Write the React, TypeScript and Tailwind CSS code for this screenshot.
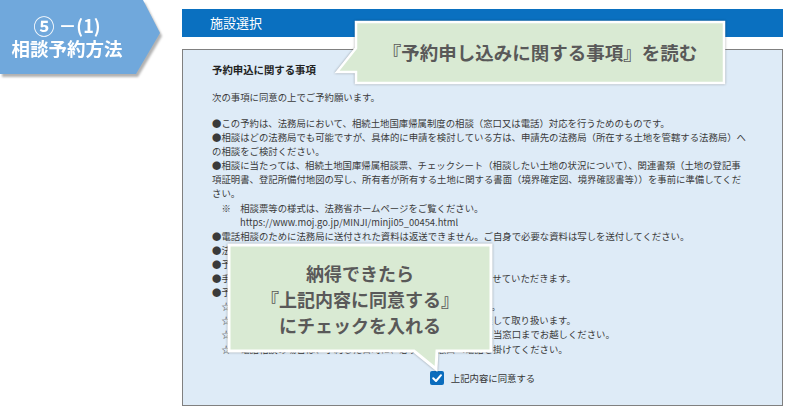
import React from "react";

const lines: { t: string; cls?: string }[] = [
  { t: "●この予約は、法務局において、相続土地国庫帰属制度の相談（窓口又は電話）対応を行うためのものです。" },
  { t: "●相談はどの法務局でも可能ですが、具体的に申請を検討している方は、申請先の法務局（所在する土地を管轄する法務局）へ" },
  { t: "の相談をご検討ください。" },
  { t: "●相談に当たっては、相続土地国庫帰属相談票、チェックシート（相談したい土地の状況について）、関連書類（土地の登記事" },
  { t: "項証明書、登記所備付地図の写し、所有者が所有する土地に関する書面（境界確定図、境界確認書等））を事前に準備してくだ" },
  { t: "さい。" },
  { t: "　※　相談票等の様式は、法務省ホームページをご覧ください。" },
  { t: "https://www.moj.go.jp/MINJI/minji05_00454.html", cls: "pl-[28px]" },
  { t: "●電話相談のために法務局に送付された資料は返送できません。ご自身で必要な資料は写しを送付してください。" },
  { t: "●法務局からの連絡は、予約時のメールアドレスに送信します。" },
  { t: "●予約の変更・取消しは、予約サイトから行ってください。" },
  { t: "●手続の状況によっては、相談日時の変更又は予約の取り消しをさせていただきます。" },
  { t: "●予約に当たっては、以下の点に御留意ください。" },
  { t: "　☆　相談時間は、原則として、１回当たり３０分以内となります。" },
  { t: "　☆　ご相談の内容は、個人情報として法令に基づいて適切に管理して取り扱います。" },
  { t: "　☆　窓口相談の場合は、予約した日時に、予約をした法務局の担当窓口までお越しください。" },
  { t: "　☆　電話相談の場合は、予約した日時に、必ず担当窓口へ電話を掛けてください。" },
];

export default function App() {
  return (
    <div className="relative flex h-[417px] w-[800px] overflow-hidden bg-white font-['Noto_Sans_CJK_JP','Noto_Sans',sans-serif]">
      {/* left step banner */}
      <div className="w-[182px] shrink-0">
        <div className="drop-shadow-[2px_3px_1px_rgba(0,0,0,0.3)]">
          <div className="flex h-[74px] w-[160px] flex-col items-center justify-center bg-[#70a8dc] pr-[26px] font-bold text-white [clip-path:polygon(0_0,143px_0,160px_33px,136px_74px,0_74px)]">
            <div className="flex items-center gap-[4px] text-[18px] leading-[22px]">
              <span className="text-[21px]">⑤</span>
              <span>－(1)</span>
            </div>
            <div className="text-[18.5px] leading-[24px]">相談予約方法</div>
          </div>
        </div>
      </div>

      {/* main column */}
      <div className="flex w-[601px] shrink-0 flex-col gap-[12px] pt-[9px]">
        <div className="flex h-[28px] items-center bg-[#0a70c0] pl-[28px] text-[13px] text-white">
          施設選択
        </div>
        <div className="flex h-[357px] flex-col border border-[#808080] bg-[#deebf7] pl-[29px] pt-[13px] text-[9.4px] leading-[14.1px] text-[#3a3a3a]">
          <div className="mb-[12.25px] text-[10.4px] font-bold leading-[14.25px] text-[#222]">予約申込に関する事項</div>
          <div className="mb-[12.25px] whitespace-nowrap leading-[14.25px]">次の事項に同意の上でご予約願います。</div>
          {lines.map((l, i) => (
            <div key={i} className={`whitespace-nowrap ${l.cls ?? ""}`}>
              {l.t}
            </div>
          ))}
          <div className="mt-[15px] flex items-center justify-center gap-[7px] pr-[29px]">
            <div className="flex h-[14px] w-[14px] items-center justify-center rounded-[2px] bg-[#0b6cbd]">
              <svg width="14" height="14" viewBox="0 0 14 14">
                <path d="M3.2 7.2 L6 10 L11 4.2" fill="none" stroke="white" strokeWidth="2" strokeLinecap="round" strokeLinejoin="round" />
              </svg>
            </div>
            <span className="text-[9.4px] text-[#333]">上記内容に同意する</span>
          </div>
        </div>
      </div>

      {/* callout 1 */}
      <div className="absolute left-[356px] top-[22px] flex h-[61px] w-[368px] items-center justify-center">
        <svg className="absolute left-0 top-0 overflow-visible drop-shadow-[0_0_1px_rgba(0,0,0,0.35)]" width="368" height="61">
          <path d="M0 0 H368 V61 H0 V50 H-19 L0 26 Z" fill="#d9ead3" stroke="white" strokeWidth="2.5" strokeLinejoin="miter" />
        </svg>
        <span className="relative text-[18.5px] font-bold leading-none text-[#595959]">『予約申し込みに関する事項』を読む</span>
      </div>

      {/* callout 2 */}
      <div className="absolute left-[229px] top-[245px] flex h-[106px] w-[262px] flex-col items-center justify-center pt-[2px]">
        <svg className="absolute left-0 top-0 overflow-visible drop-shadow-[0_0_1px_rgba(0,0,0,0.35)]" width="262" height="106">
          <path d="M0 0 H262 V106 H208 L207 124 L185 106 H0 Z" fill="#d9ead3" stroke="white" strokeWidth="3" strokeLinejoin="miter" />
        </svg>
        <div className="relative text-center text-[18px] font-bold leading-[26px] text-[#595959]">
          <div>納得できたら</div>
          <div>『上記内容に同意する』</div>
          <div>にチェックを入れる</div>
        </div>
      </div>
    </div>
  );
}
